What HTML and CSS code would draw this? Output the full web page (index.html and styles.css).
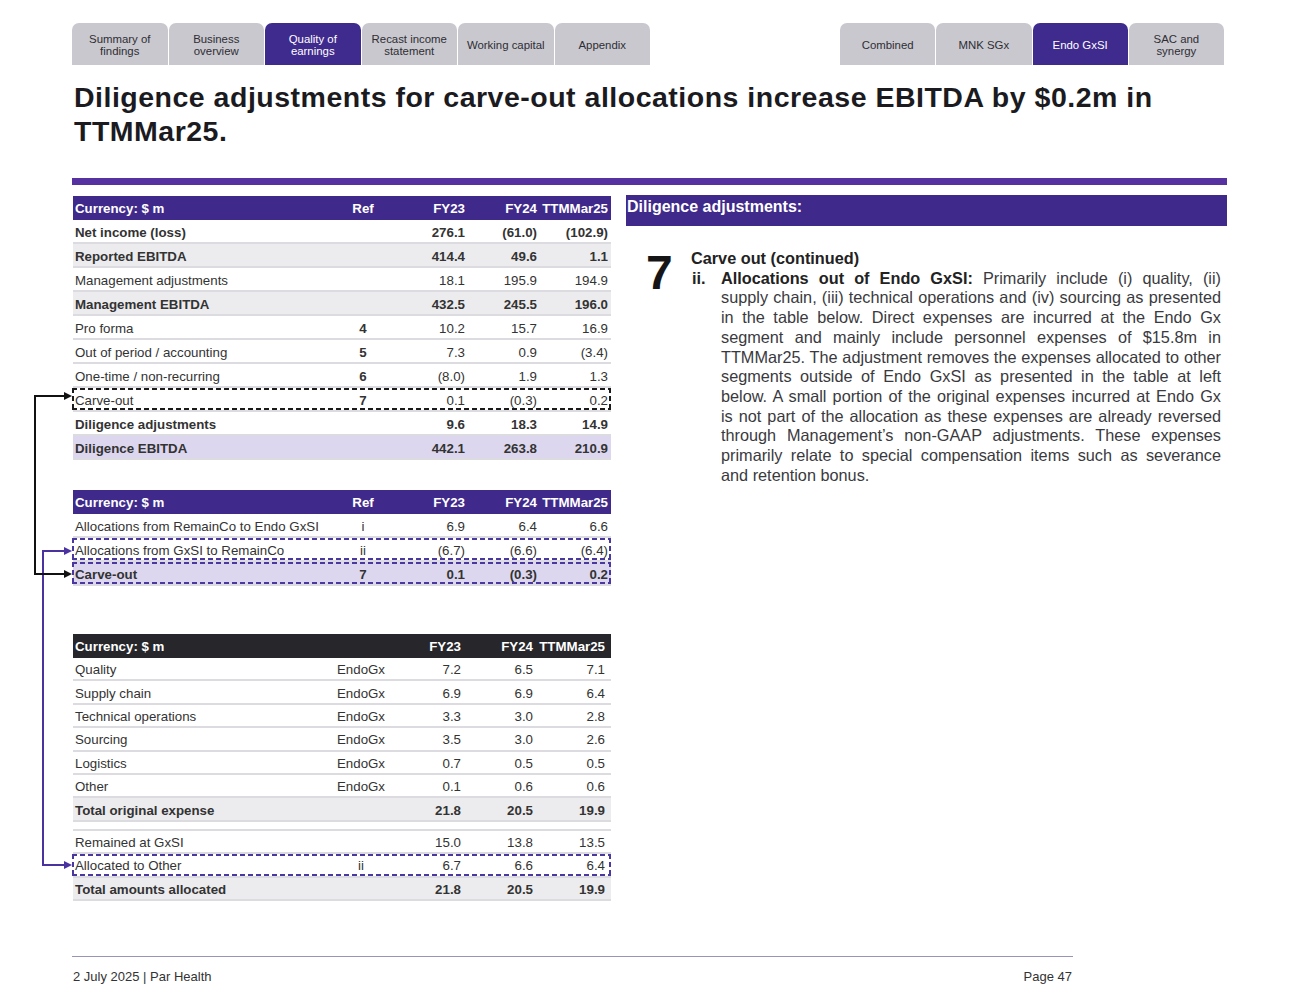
FILE: index.html
```html
<!DOCTYPE html>
<html lang="en">
<head>
<meta charset="utf-8">
<title>Diligence adjustments</title>
<link rel="stylesheet" href="styles.css">
</head>
<body>
<div class="page">
  <nav class="tabbar">
    <div class="tabs tabs-left">
      <div class="tab">Summary of<br>findings</div>
      <div class="tab">Business<br>overview</div>
      <div class="tab active">Quality of<br>earnings</div>
      <div class="tab">Recast income<br>statement</div>
      <div class="tab">Working capital</div>
      <div class="tab">Appendix</div>
    </div>
    <div class="tabs tabs-right">
      <div class="tab">Combined</div>
      <div class="tab">MNK SGx</div>
      <div class="tab active">Endo GxSI</div>
      <div class="tab">SAC and<br>synergy</div>
    </div>
  </nav>

  <h1 class="title">Diligence adjustments for carve-out allocations increase EBITDA by $0.2m in<br>TTMMar25.</h1>
  <div class="rule"></div>

  <main class="content">
    <section class="tables">
      <div class="tbl t-main">
        <div class="row head"><span>Currency: $ m</span><span class="c">Ref</span><span class="n">FY23</span><span class="n">FY24</span><span class="n">TTMMar25</span></div>
        <div class="row b"><span>Net income (loss)</span><span class="c"></span><span class="n">276.1</span><span class="n">(61.0)</span><span class="n">(102.9)</span></div>
        <div class="row b grey"><span>Reported EBITDA</span><span class="c"></span><span class="n">414.4</span><span class="n">49.6</span><span class="n">1.1</span></div>
        <div class="row"><span>Management adjustments</span><span class="c"></span><span class="n">18.1</span><span class="n">195.9</span><span class="n">194.9</span></div>
        <div class="row b grey"><span>Management EBITDA</span><span class="c"></span><span class="n">432.5</span><span class="n">245.5</span><span class="n">196.0</span></div>
        <div class="row"><span>Pro forma</span><span class="c b">4</span><span class="n">10.2</span><span class="n">15.7</span><span class="n">16.9</span></div>
        <div class="row"><span>Out of period / accounting</span><span class="c b">5</span><span class="n">7.3</span><span class="n">0.9</span><span class="n">(3.4)</span></div>
        <div class="row"><span>One-time / non-recurring</span><span class="c b">6</span><span class="n">(8.0)</span><span class="n">1.9</span><span class="n">1.3</span></div>
        <div class="row dash dash-black"><span>Carve-out</span><span class="c b">7</span><span class="n">0.1</span><span class="n">(0.3)</span><span class="n">0.2</span></div>
        <div class="row b"><span>Diligence adjustments</span><span class="c"></span><span class="n">9.6</span><span class="n">18.3</span><span class="n">14.9</span></div>
        <div class="row b lilac"><span>Diligence EBITDA</span><span class="c"></span><span class="n">442.1</span><span class="n">263.8</span><span class="n">210.9</span></div>
      </div>

      <div class="tbl t-main t-alloc">
        <div class="row head"><span>Currency: $ m</span><span class="c">Ref</span><span class="n">FY23</span><span class="n">FY24</span><span class="n">TTMMar25</span></div>
        <div class="row"><span>Allocations from RemainCo to Endo GxSI</span><span class="c">i</span><span class="n">6.9</span><span class="n">6.4</span><span class="n">6.6</span></div>
        <div class="row dash dash-purple"><span>Allocations from GxSI to RemainCo</span><span class="c">ii</span><span class="n">(6.7)</span><span class="n">(6.6)</span><span class="n">(6.4)</span></div>
        <div class="row b lilac dash dash-purple"><span>Carve-out</span><span class="c">7</span><span class="n">0.1</span><span class="n">(0.3)</span><span class="n">0.2</span></div>
      </div>

      <div class="tbl t-exp">
        <div class="row head dark"><span>Currency: $ m</span><span class="c"></span><span class="n">FY23</span><span class="n">FY24</span><span class="n">TTMMar25</span></div>
        <div class="row"><span>Quality</span><span class="c">EndoGx</span><span class="n">7.2</span><span class="n">6.5</span><span class="n">7.1</span></div>
        <div class="row"><span>Supply chain</span><span class="c">EndoGx</span><span class="n">6.9</span><span class="n">6.9</span><span class="n">6.4</span></div>
        <div class="row"><span>Technical operations</span><span class="c">EndoGx</span><span class="n">3.3</span><span class="n">3.0</span><span class="n">2.8</span></div>
        <div class="row"><span>Sourcing</span><span class="c">EndoGx</span><span class="n">3.5</span><span class="n">3.0</span><span class="n">2.6</span></div>
        <div class="row"><span>Logistics</span><span class="c">EndoGx</span><span class="n">0.7</span><span class="n">0.5</span><span class="n">0.5</span></div>
        <div class="row"><span>Other</span><span class="c">EndoGx</span><span class="n">0.1</span><span class="n">0.6</span><span class="n">0.6</span></div>
        <div class="row b grey"><span>Total original expense</span><span class="c"></span><span class="n">21.8</span><span class="n">20.5</span><span class="n">19.9</span></div>
        <div class="row split"><span>Remained at GxSI</span><span class="c"></span><span class="n">15.0</span><span class="n">13.8</span><span class="n">13.5</span></div>
        <div class="row dash dash-purple"><span>Allocated to Other</span><span class="c">ii</span><span class="n">6.7</span><span class="n">6.6</span><span class="n">6.4</span></div>
        <div class="row b grey"><span>Total amounts allocated</span><span class="c"></span><span class="n">21.8</span><span class="n">20.5</span><span class="n">19.9</span></div>
      </div>
    </section>

    <section class="notes">
      <div class="notes-head">Diligence adjustments:</div>
      <div class="note">
        <div class="note-num">7</div>
        <div class="note-body">
          <div class="note-title">Carve out (continued)</div>
          <div class="item">
            <div class="item-mark">ii.</div>
            <p class="item-text"><strong>Allocations out of Endo GxSI:</strong> Primarily include (i) quality, (ii) supply chain, (iii) technical operations and (iv) sourcing as presented in the table below. Direct expenses are incurred at the Endo Gx segment and mainly include personnel expenses of $15.8m in TTMMar25. The adjustment removes the expenses allocated to other segments outside of Endo GxSI as presented in the table at left below. A small portion of the original expenses incurred at Endo Gx is&nbsp;not part of the allocation as these expenses are already reversed through Management’s non-GAAP adjustments. These expenses primarily relate to special compensation items such as severance and retention bonus.</p>
          </div>
        </div>
      </div>
    </section>
  </main>

  <footer class="footer">
    <span>2 July 2025 | Par Health</span>
    <span>Page 47</span>
  </footer>

  <svg class="links" width="1300" height="1005" viewBox="0 0 1300 1005" aria-hidden="true">
    <path d="M66 551 H43 V865 H66" stroke="#4a33a0" stroke-width="2" fill="none"/>
    <polygon points="72,551 64,547 64,555" fill="#4a33a0"/>
    <polygon points="72,865 64,861 64,869" fill="#4a33a0"/>
    <path d="M66 396 H35 V574 H66" stroke="#111" stroke-width="2" fill="none"/>
    <polygon points="72,396 64,392 64,400" fill="#111"/>
    <polygon points="72,574 64,570 64,578" fill="#111"/>
  </svg>
</div>
</body>
</html>
```

FILE: styles.css
```css
* { box-sizing: border-box; }

html, body {
  margin: 0;
  padding: 0;
  background: #fff;
}

body {
  font-family: "Liberation Sans", Arial, sans-serif;
  color: #333;
}

.page {
  position: relative;
  width: 1300px;
  height: 1005px;
  padding: 23px 0 0 72px;
}

/* ---------- tabs ---------- */
.tabbar {
  display: flex;
  justify-content: space-between;
  width: 1152px;
}

.tabs {
  display: flex;
  gap: 1px;
}

.tab {
  width: 95.5px;
  height: 42px;
  background: #c9c8cf;
  border-radius: 7px 7px 0 0;
  display: flex;
  align-items: center;
  justify-content: center;
  text-align: center;
  font-size: 11.4px;
  line-height: 12px;
  color: #2e2e33;
  padding-top: 1px;
}

.tabs-right .tab { width: 95.25px; }

.tab.active {
  background: #3f2a8d;
  color: #fff;
}

/* ---------- title ---------- */
.title {
  margin: 15px 0 0 2px;
  font-size: 28.5px;
  letter-spacing: 0.5px;
  line-height: 34px;
  font-weight: bold;
  color: #1b1b1f;
}

.rule {
  margin-top: 30px;
  width: 1155px;
  height: 7px;
  background: #55329f;
}

/* ---------- content ---------- */
.content {
  display: flex;
  gap: 15px;
  margin-top: 10px;
}

.tables {
  width: 538px;
  margin-left: 1px;
  padding-top: 1px;
}

.tbl {
  width: 538px;
  font-size: 13.3px;
  color: #333;
}

.t-alloc { margin-top: 30px; }
.t-exp { margin-top: 48px; }

.row {
  display: grid;
  grid-template-columns: 260px 56px 74px 72px 71px;
  align-items: center;
  height: 24px;
  padding-left: 2px;
  padding-top: 2px;
  border-bottom: 2px solid #dcdce0;
  white-space: nowrap;
}

.t-exp .row {
  grid-template-columns: 256px 60px 70px 72px 72px;
  height: 23.4px;
}

.row.head {
  height: 24px;
  padding-top: 0;
  border-bottom: 0;
  background: #3f2a8b;
  color: #fff;
  font-weight: bold;
}

.t-exp .row.head { height: 24px; }

.row.head.dark { background: #26262b; }

.row .c { text-align: center; }
.row .n { text-align: right; }
.b { font-weight: bold; }

.row.grey { background: #ececef; }
.row.lilac { background: #dcd7ef; }

.t-exp .row.split {
  margin-top: 7px;
  height: 25.4px;
  border-top: 2px solid #dcdce0;
}

/* dashed highlight boxes */
.dash { position: relative; }
.dash::after {
  content: "";
  position: absolute;
  top: 0;
  right: 0;
  bottom: 0;
  left: -1px;
  pointer-events: none;
  background:
    repeating-linear-gradient(to right, var(--dc) 0 5px, transparent 5px 8px) top left / 100% 2px no-repeat,
    repeating-linear-gradient(to right, var(--dc) 0 5px, transparent 5px 8px) bottom left / 100% 2px no-repeat,
    repeating-linear-gradient(to bottom, var(--dc) 0 5px, transparent 5px 8px) top left / 2px 100% no-repeat,
    repeating-linear-gradient(to bottom, var(--dc) 0 5px, transparent 5px 8px) top right / 2px 100% no-repeat;
}
.dash-black { --dc: #1a1a1a; }
.dash-purple { --dc: #4a37a0; }

/* ---------- notes panel ---------- */
.notes { width: 601px; }

.notes-head {
  height: 31px;
  background: #3f2a8b;
  color: #fff;
  font-weight: bold;
  font-size: 16px;
  line-height: 20px;
  padding: 2px 0 0 1px;
}

.note {
  display: flex;
  margin-top: 23px;
}

.note-num {
  width: 45px;
  margin-left: 20px;
  font-size: 48px;
  line-height: 48px;
  font-weight: bold;
  color: #151517;
}

.note-body {
  width: 536px;
  padding-right: 6px;
  font-size: 16.28px;
  line-height: 19.7px;
  color: #3a3a3e;
}

.note-title {
  font-weight: bold;
  color: #222;
}

.item { display: flex; }

.item-mark {
  width: 30px;
  padding-left: 1px;
  font-weight: bold;
  color: #222;
}

.item-text {
  flex: 1;
  margin: 0;
  text-align: justify;
}

.item-text strong { color: #222; }

/* ---------- footer ---------- */
.footer {
  display: flex;
  justify-content: space-between;
  width: 1001px;
  margin-top: 55px;
  padding: 12px 1px 0 1px;
  border-top: 1px solid #9a93b5;
  font-size: 13px;
  line-height: 15px;
  color: #333;
}

/* ---------- connectors overlay ---------- */
.links {
  position: absolute;
  top: 0;
  left: 0;
  pointer-events: none;
}
```
